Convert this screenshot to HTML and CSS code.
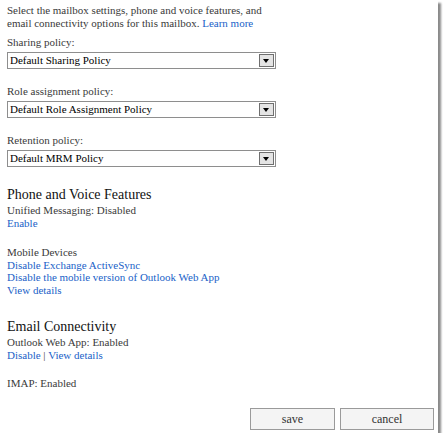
FILE: index.html
```html
<!DOCTYPE html>
<html>
<head>
<meta charset="utf-8">
<link rel="stylesheet" href="styles.css">
</head>
<body>
<div class="panel">
  <div class="content">
    <div class="intro">
      <div class="intro-line">Select the mailbox settings, phone and voice features, and</div>
      <div class="intro-line">email connectivity options for this mailbox. <a class="link" href="#">Learn more</a></div>
    </div>

    <div class="field">
      <div class="label">Sharing policy:</div>
      <div class="select"><span class="value">Default Sharing Policy</span><span class="arrow"></span></div>
    </div>
    <div class="field">
      <div class="label">Role assignment policy:</div>
      <div class="select"><span class="value">Default Role Assignment Policy</span><span class="arrow"></span></div>
    </div>
    <div class="field">
      <div class="label">Retention policy:</div>
      <div class="select"><span class="value">Default MRM Policy</span><span class="arrow"></span></div>
    </div>

    <h2 class="heading">Phone and Voice Features</h2>
    <div class="line">Unified Messaging: Disabled</div>
    <div class="line"><a class="link" href="#">Enable</a></div>

    <div class="group">
      <div class="line">Mobile Devices</div>
      <div class="line"><a class="link" href="#">Disable Exchange ActiveSync</a></div>
      <div class="line"><a class="link" href="#">Disable the mobile version of Outlook Web App</a></div>
      <div class="line"><a class="link" href="#">View details</a></div>
    </div>

    <h2 class="heading heading2">Email Connectivity</h2>
    <div class="line">Outlook Web App: Enabled</div>
    <div class="line"><a class="link" href="#">Disable</a> | <a class="link" href="#">View details</a></div>

    <div class="group group2">
      <div class="line">IMAP: Enabled</div>
    </div>
  </div>
  <div class="buttons">
    <button class="btn">save</button>
    <button class="btn">cancel</button>
  </div>
</div>
</body>
</html>
```
FILE: styles.css
```css
html, body {
  margin: 0;
  padding: 0;
  background: #ffffff;
}
body {
  font-family: "Liberation Serif", "Times New Roman", serif;
  font-size: 11px;
  color: #3a3a3a;
}
.panel {
  position: relative;
  width: 438px;
  height: 433px;
  background: #ffffff;
  box-shadow: 3px 3px 2px #8a8a8a;
  display: flex;
  flex-direction: column;
}
.content {
  flex: 1;
  padding: 4px 0 0 7px;
}
.intro {
  margin: 0;
}
.intro-line {
  line-height: 13px;
  white-space: nowrap;
}
.link {
  color: #1a5fc8;
  text-decoration: none;
}
.field {
  margin-top: 6px;
}
.field + .field {
  margin-top: 16px;
}
.label {
  line-height: 13px;
  margin-bottom: 3px;
}
.select {
  width: 267px;
  height: 15px;
  border: 1px solid #8e8e8e;
  display: flex;
  align-items: center;
  justify-content: space-between;
  color: #000000;
  font-size: 11px;
}
.value {
  padding-left: 2px;
  line-height: 15px;
}
.arrow {
  width: 13px;
  height: 11px;
  margin-right: 1px;
  border: 1px solid #6f6f6f;
  background: #e4e4e4;
  position: relative;
}
.arrow::after {
  content: "";
  position: absolute;
  left: 3px;
  top: 4px;
  border-left: 3.5px solid transparent;
  border-right: 3.5px solid transparent;
  border-top: 4px solid #000;
}
.heading {
  margin: 20px 0 1px 0;
  font-size: 14px;
  font-weight: normal;
  color: #111111;
  line-height: 16px;
}
.heading2 {
  margin-top: 23px;
}
.line {
  line-height: 12.5px;
}
.group {
  margin-top: 17px;
}
.group2 {
  margin-top: 16px;
}
.buttons {
  display: flex;
  justify-content: flex-end;
  gap: 5px;
  padding: 0 4px 3px 0;
}
.btn {
  font-family: "Liberation Serif", "Times New Roman", serif;
  font-size: 12px;
  color: #333333;
  background: #f4f4f4;
  border: 1px solid #9a9a9a;
  height: 22px;
  width: 85px;
  padding: 0;
  margin: 0;
}
.btn + .btn {
  width: 94px;
}
```
